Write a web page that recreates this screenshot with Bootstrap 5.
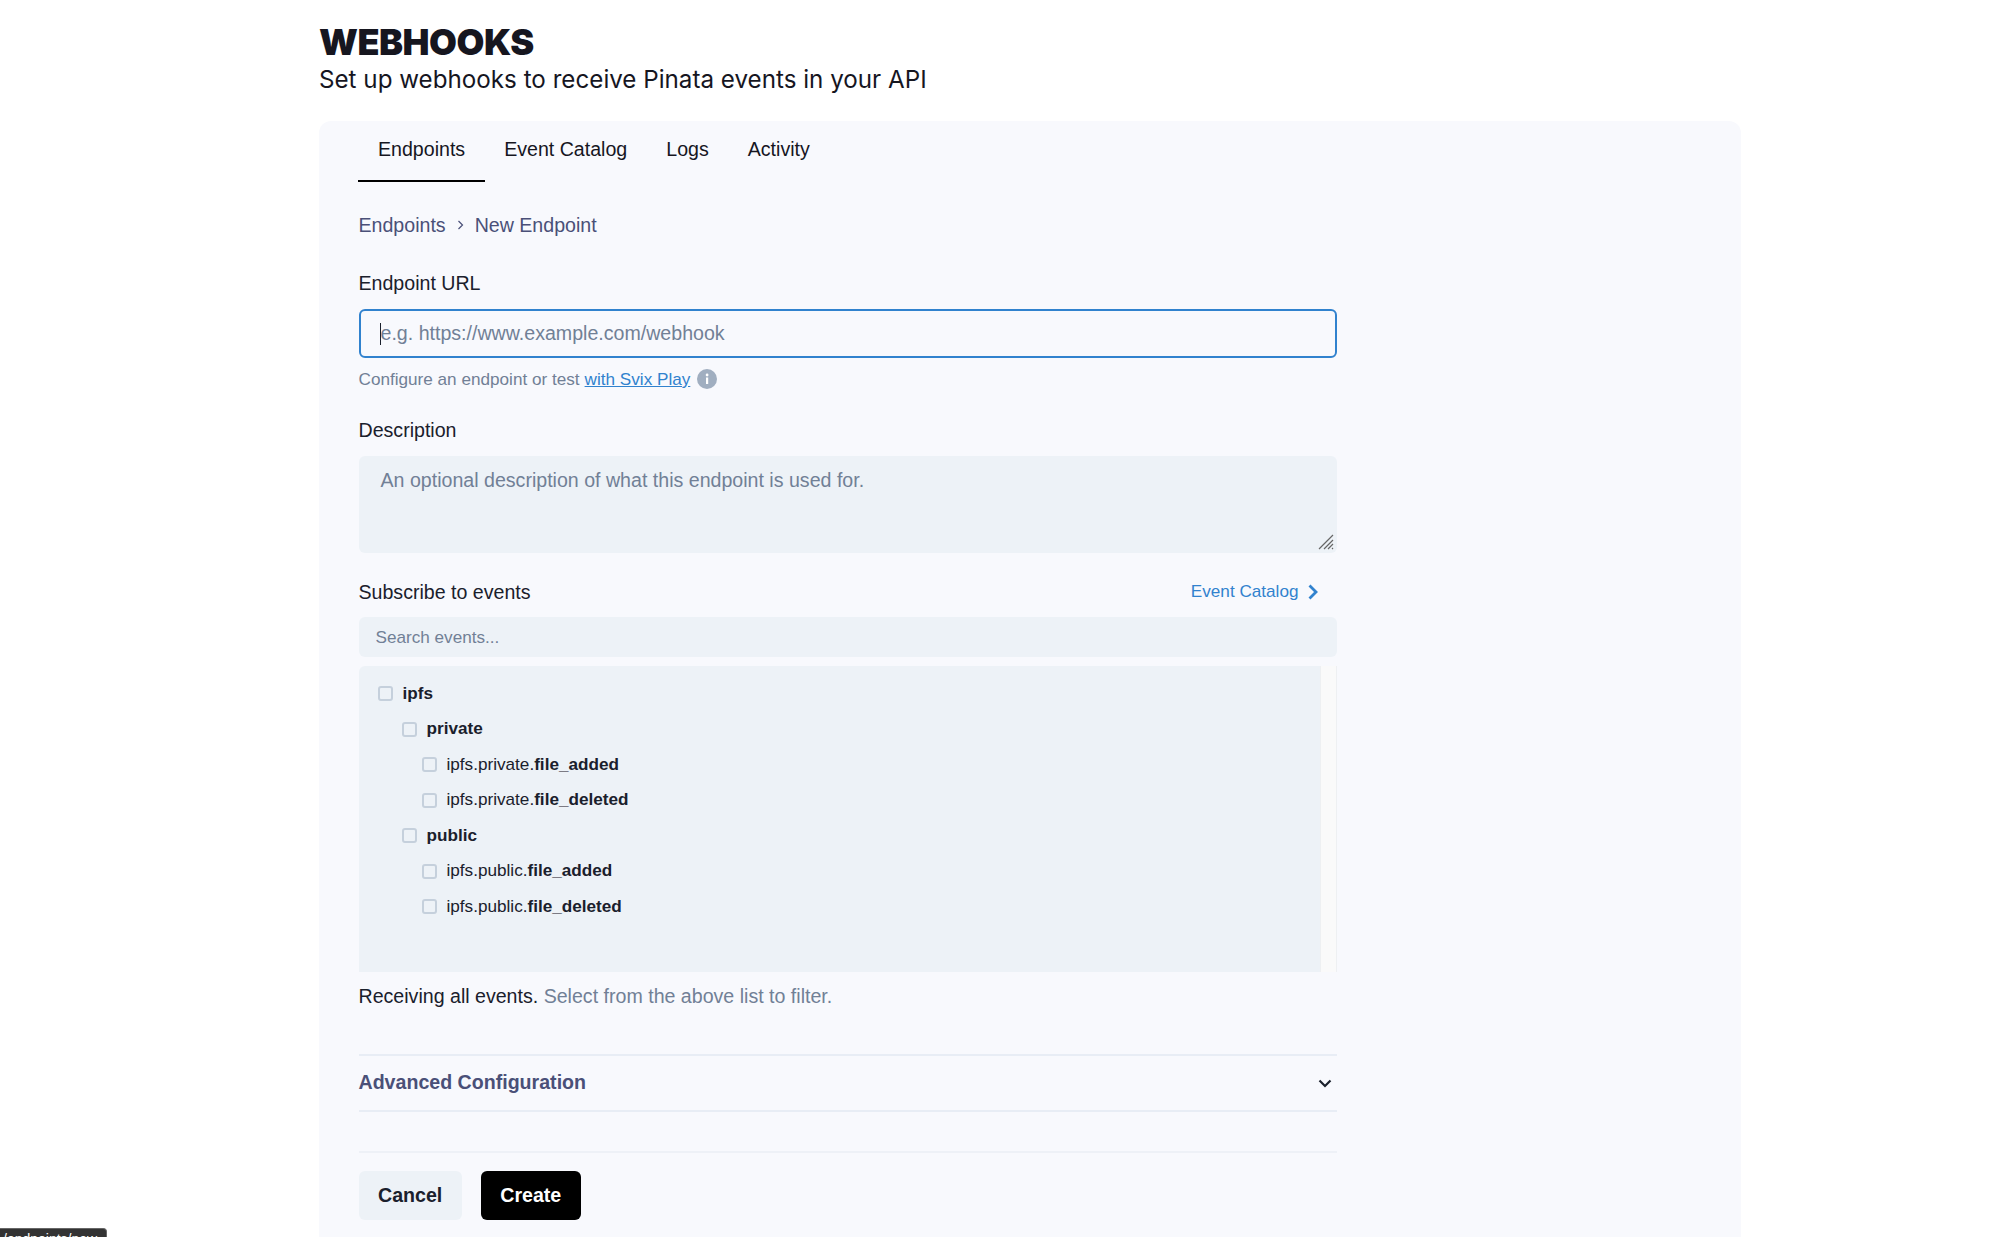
<!DOCTYPE html>
<html lang="en">

<head>
    <meta charset="UTF-8">
    <meta name="viewport" content="width=device-width, initial-scale=1.0">
    <title>Webhooks</title>
    <link href="https://cdn.jsdelivr.net/npm/bootstrap@5.3.2/dist/css/bootstrap.min.css" rel="stylesheet">
    <style>
        body {
            font-family: "Liberation Sans", Arial, sans-serif;
            color: #1a202c;
            background: #fff;
            height: 1237px;
            overflow: hidden;
        }

        .page-wrap {
            margin-left: 319px;
            width: 1422px;
        }

        .page-title {
            font-family: Inter, sans-serif;
            font-weight: 900;
            font-size: 36px;
            line-height: 44px;
            letter-spacing: -.5px;
            color: #16161f;
            margin: 20px 0 0;
        }

        .page-sub {
            font-family: Inter, sans-serif;
            font-size: 24.2px;
            line-height: 30px;
            color: #16161f;
            margin: 1px 0 26px;
        }

        .panel {
            background: #f8f9fd;
            border-radius: 12px 12px 0 0;
            padding: 0 39.5px;
            height: 1116px;
        }

        .tab-row {
            display: flex;
            height: 61px;
            margin-left: -.5px;
        }

        .tab-item {
            font-size: 19.6px;
            line-height: 28px;
            padding: 14px 20px 0;
            color: #16161f;
        }

        .tab-item + .tab-item {
            padding-left: 19px;
        }

        .tab-item.on {
            border-bottom: 2px solid #000;
        }

        .crumbs {
            display: flex;
            align-items: center;
            gap: 11px;
            color: #4a5078;
            font-size: 19.6px;
            line-height: 28px;
            margin-top: 29px;
        }

        .form-area {
            width: 978px;
        }

        .fld-label {
            font-size: 19.6px;
            line-height: 28px;
            color: #1a202c;
            margin: 0 0 12px;
        }

        .url-label {
            margin-top: 30px;
        }

        .desc-label {
            margin-top: 27px;
            margin-bottom: 12px;
        }

        .url-box {
            position: relative;
            height: 49px;
        }

        .url-input,
        .desc-input,
        .search-input {
            width: 100%;
            display: block;
            font-family: inherit;
            color: #1a202c;
            outline: 0;
        }

        .url-input::placeholder,
        .desc-input::placeholder,
        .search-input::placeholder {
            color: #718096;
            opacity: 1;
        }

        .url-input {
            height: 49px;
            font-size: 19.6px;
            padding: 0 20px;
            background: #f8f9fd;
            border: 2px solid #3182ce;
            border-radius: 6px;
        }

        .caret-line {
            position: absolute;
            left: 21px;
            top: 14px;
            width: 1px;
            height: 22px;
            background: #1a202c;
        }

        .help-line {
            font-size: 17.15px;
            line-height: 20px;
            color: #718096;
            margin-top: 11px;
            display: flex;
            align-items: center;
        }

        .help-line a {
            color: #3182ce;
            margin-left: 5px;
        }

        .info-dot {
            margin-left: 7px;
        }

        .desc-box {
            position: relative;
        }

        .desc-input {
            height: 97px;
            font-size: 19.6px;
            line-height: 28px;
            padding: 10px 22px;
            background: #edf2f7;
            border: 0;
            border-radius: 6px;
            resize: none;
        }

        .grip-mark {
            position: absolute;
            right: 3px;
            bottom: 3px;
        }

        .sub-row {
            margin-top: 25px;
            margin-bottom: 11px;
        }

        .cat-link {
            color: #3182ce;
            font-size: 17.15px;
            text-decoration: none;
            display: flex;
            align-items: center;
            gap: 9px;
            padding-right: 19px;
        }

        .search-input {
            height: 40px;
            font-size: 17.15px;
            padding: 0 17px;
            background: #edf2f7;
            border: 0;
            border-radius: 6px;
        }

        .tree-wrap {
            display: flex;
            height: 306px;
            margin-top: 9px;
        }

        .tree-list {
            flex: 1;
            background: #edf2f7;
            border-radius: 6px 0 0 0;
            padding-top: 10px;
            font-size: 17.15px;
        }

        .tree-bar {
            width: 17px;
            background: #fafafa;
            border-left: 1px solid #eef0f2;
            border-right: 1px solid #eef0f2;
        }

        .tree-row {
            height: 35.5px;
            display: flex;
            align-items: center;
            gap: 10px;
        }

        .tree-row .form-check-input {
            width: 15px;
            height: 15px;
            margin: 0;
            background-color: #edf2f7;
            border: 2px solid #c5d0dc;
            border-radius: 3px;
            flex: none;
        }

        .lvl-0 {
            padding-left: 19px;
        }

        .lvl-1 {
            padding-left: 43px;
        }

        .lvl-2 {
            padding-left: 63px;
        }

        .receive-line {
            font-size: 19.6px;
            line-height: 28px;
            margin-top: 10px;
        }

        .receive-line span {
            color: #718096;
        }

        .adv-row {
            margin-top: 44px;
            height: 58px;
            border-top: 2px solid #e8edf5;
            border-bottom: 2px solid #e8edf5;
            color: #4a5078;
            font-size: 19.6px;
            font-weight: 700;
            padding-right: 5px;
        }

        .foot-rule {
            border-top: 2px solid #eef1f7;
            margin-top: 39px;
            padding-top: 18px;
            gap: 19px;
        }

        .btn-cancel,
        .btn-create {
            height: 49px;
            font-size: 19.6px;
            font-weight: 700;
            border-radius: 6px;
            border: 0;
            padding: 0 19.5px;
        }

        .btn-cancel {
            background: #edf2f7;
            color: #1a202c;
        }

        .btn-create {
            background: #000;
            color: #fff;
        }

        .url-tip {
            position: absolute;
            left: 0;
            top: 1228px;
            width: 107px;
            height: 22px;
            background: #333;
            color: #fff;
            border-top: 1px solid #666;
            border-right: 1px solid #666;
            border-radius: 0 4px 0 0;
            font-size: 14px;
            line-height: 21px;
            padding-left: 3px;
            overflow: hidden;
        }
    </style>
</head>

<body>
    <div class="page-wrap">
        <h1 class="page-title">WEBHOOKS</h1>
        <p class="page-sub">Set up webhooks to receive Pinata events in your API</p>

        <div class="panel">
            <div class="tab-row">
                <div class="tab-item on">Endpoints</div>
                <div class="tab-item">Event Catalog</div>
                <div class="tab-item">Logs</div>
                <div class="tab-item">Activity</div>
            </div>

            <div class="crumbs">
                <span>Endpoints</span>
                <svg width="7" height="10" viewBox="0 0 7 10" fill="none" stroke="#4a5078" stroke-width="1.2"><path d="M1.5 1l4 4-4 4" /></svg>
                <span>New Endpoint</span>
            </div>

            <form class="form-area">
                <div class="fld-label url-label">Endpoint URL</div>
                <div class="url-box">
                    <input class="url-input" type="text" placeholder="e.g. https://www.example.com/webhook">
                    <span class="caret-line"></span>
                </div>
                <div class="help-line">
                    Configure an endpoint or test <a href="#">with Svix Play</a>
                    <svg class="info-dot" width="20" height="20" viewBox="0 0 20 20">
                        <circle cx="10" cy="10" r="10" fill="#a0aec0" />
                        <rect x="9" y="8.5" width="2.2" height="6.5" fill="#fff" />
                        <circle cx="10.1" cy="6" r="1.4" fill="#fff" />
                    </svg>
                </div>

                <div class="fld-label desc-label">Description</div>
                <div class="desc-box">
                    <textarea class="desc-input" placeholder="An optional description of what this endpoint is used for."></textarea>
                    <svg class="grip-mark" width="16" height="16" viewBox="0 0 16 16" fill="none" stroke="#666" stroke-width="1.2">
                        <path d="M1 15L15 1M6 15L15 6M10 15l5-5M14 15l1-1" />
                    </svg>
                </div>

                <div class="d-flex justify-content-between align-items-center sub-row">
                    <div class="fld-label mb-0">Subscribe to events</div>
                    <a class="cat-link" href="#">Event Catalog
                        <svg width="10" height="16" viewBox="0 0 10 16" fill="none" stroke="#3182ce" stroke-width="2.800"><path d="M1.500 1.500L8 8l-6.500 6.500" /></svg>
                    </a>
                </div>
                <input class="search-input" type="text" placeholder="Search events...">

                <div class="tree-wrap">
                    <div class="tree-list">
                        <label class="tree-row lvl-0"><input class="form-check-input" type="checkbox"><b>ipfs</b></label>
                        <label class="tree-row lvl-1"><input class="form-check-input" type="checkbox"><b>private</b></label>
                        <label class="tree-row lvl-2"><input class="form-check-input" type="checkbox"><span>ipfs.private.<b>file_added</b></span></label>
                        <label class="tree-row lvl-2"><input class="form-check-input" type="checkbox"><span>ipfs.private.<b>file_deleted</b></span></label>
                        <label class="tree-row lvl-1"><input class="form-check-input" type="checkbox"><b>public</b></label>
                        <label class="tree-row lvl-2"><input class="form-check-input" type="checkbox"><span>ipfs.public.<b>file_added</b></span></label>
                        <label class="tree-row lvl-2"><input class="form-check-input" type="checkbox"><span>ipfs.public.<b>file_deleted</b></span></label>
                    </div>
                    <div class="tree-bar"></div>
                </div>

                <div class="receive-line">Receiving all events. <span>Select from the above list to filter.</span></div>

                <div class="adv-row d-flex justify-content-between align-items-center">
                    <span>Advanced Configuration</span>
                    <svg width="14" height="9" viewBox="0 0 14 9" fill="none" stroke="#1a202c" stroke-width="2.2"><path d="M1.500 1.500L7 7l5.500-5.500" /></svg>
                </div>

                <div class="foot-rule d-flex">
                    <button type="button" class="btn btn-cancel">Cancel</button>
                    <button type="button" class="btn btn-create">Create</button>
                </div>
            </form>
        </div>
    </div>
    <div class="url-tip">/endpoints/new</div>

    <script src="https://cdn.jsdelivr.net/npm/bootstrap@5.3.2/dist/js/bootstrap.bundle.min.js"></script>
</body>

</html>
